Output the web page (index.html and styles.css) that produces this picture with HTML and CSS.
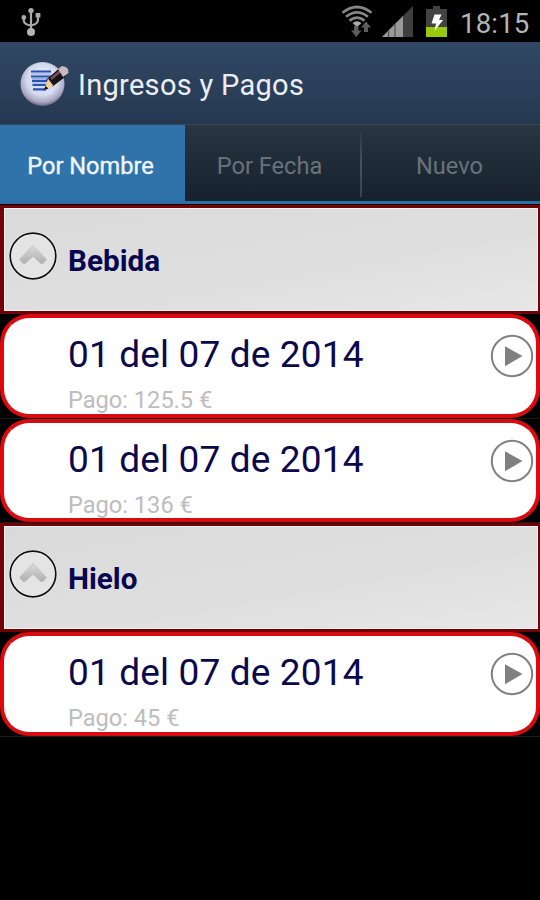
FILE: index.html
```
<!DOCTYPE html>
<html lang="es">
<head>
<meta charset="utf-8">
<title>Ingresos y Pagos</title>
<link rel="stylesheet" href="styles.css">
</head>
<body>
<svg class="defs" width="0" height="0">
  <defs>
    <linearGradient id="chev" x1="0" y1="0" x2="0" y2="1"><stop offset="0" stop-color="#dadada"/><stop offset="1" stop-color="#b0b0b0"/></linearGradient>
    <radialGradient id="disc" cx=".5" cy=".4" r=".6"><stop offset="0" stop-color="#f4f7ff"/><stop offset=".6" stop-color="#d3d8ea"/><stop offset=".85" stop-color="#aaa8c4"/><stop offset="1" stop-color="#6b6484"/></radialGradient>
    <symbol id="up" viewBox="0 0 50 50">
      <circle cx="25" cy="25" r="22.8" fill="#e4e4e4" stroke="#f4f4f4" stroke-width="3"/>
      <circle cx="25" cy="25" r="22.8" fill="none" stroke="#111" stroke-width="1.7"/>
      <path d="M25 14.500 38.500 28.500 35 32.500 32.800 32.500 25 25.200 17.200 32.500 15 32.500 11.500 28.500Z" fill="url(#chev)" stroke="#bdbdbd" stroke-width=".8" stroke-linejoin="round"/>
    </symbol>
    <symbol id="play" viewBox="0 0 44 44">
      <circle cx="22" cy="22" r="20.2" fill="#fff" stroke="#808080" stroke-width="2"/>
      <path d="M15 12.200 32.500 22 15 32.200Z" fill="#808080"/>
    </symbol>
  </defs>
</svg>
<div class="status">
  <svg class="usb" width="20" height="30" viewBox="0 0 20 30" fill="none" stroke="#aaa" stroke-width="2.2">
    <path d="M10 5V24M2.800 11V13.500Q3 17.500 10 18.500M17 9V13Q17 17 10 18.500"/>
    <circle cx="10" cy="3.600" r="2.700" fill="#aaa" stroke="none"/><circle cx="2.800" cy="10.500" r="2.400" fill="#aaa" stroke="none"/><path d="M14.600 6H19.400V10.500H14.600Z" fill="#aaa" stroke="none"/><circle cx="10" cy="25" r="4" fill="#b4b4b4" stroke="none"/>
  </svg>
  <svg class="signals" width="112" height="42" viewBox="340 0 112 42">
    <g fill="none" stroke="#868686" stroke-width="2.700"><path d="M342.500 12.800Q357 1.200 371.500 12.800"/><path d="M346 16.800Q357 8 368 16.800"/><path d="M349.500 20.600Q357 14.500 364.500 20.600"/></g>
    <path d="M352.500 23Q357 19.500 361.500 23L357 27Z" fill="#aaa"/>
    <path d="M354 26H358.500V30.500H361.500L356.300 37 351 30.500H354ZM364 32V27.500H361L366 21.500 371 27.500H368V32Z" fill="#5d5d5d"/>
    <path d="M413 6V37H382Z" fill="#3f3f3f"/><path d="M403 16V37H382Z" fill="#999"/><path d="M388.500 30V37M395 24V37" stroke="#555" stroke-width="1.300"/>
    <path d="M433 6H440V9H447V27H426V9H433Z" fill="#424242"/><path d="M426 27H447V37H426Z" fill="#99c90a"/>
    <path d="M434.500 14.500H441.500L439 20H443L434.500 31 436 23.500H431.500Z" fill="#fff"/>
  </svg>
  <span class="clock">18:15</span>
</div>
<header class="bar">
  <svg class="logo" width="50" height="48" viewBox="0 0 50 48">
    <circle cx="22.500" cy="24" r="22" fill="url(#disc)"/>
    <path d="M8 7 12 10H33V34H13L11 13Z" fill="#d5def8"/>
    <path d="M11 11.500H31M11 16.500H31M12 20.800H29M12.500 25H27M13 29.300H26" stroke="#2d51ac" stroke-width="2.200"/>
    <path d="M11 14H31M12 18.500H29M12 23H28" stroke="#8faeed" stroke-width="1"/>
    <path d="M26 20 39 8.500 47 12 45 17 32 27Z" fill="#171316"/>
    <path d="M31 19 41 10.500" stroke="#745458" stroke-width="2.500"/>
    <path d="M38 9 42 6Q49 6.500 48.500 13L43 17Z" fill="#c7b9bf"/>
    <path d="M28 18.500 33.500 26 24 30Z" fill="#f1cf9b"/><path d="M25.500 26 28.500 28.500 23.500 30.500Z" fill="#181414"/>
  </svg>
  <h1>Ingresos y Pagos</h1>
</header>
<nav class="tabs"><a class="tab active">Por Nombre</a><a class="tab second">Por Fecha</a><a class="tab third">Nuevo</a></nav>
<main>
  <section class="group"><svg class="up"><use href="#up"/></svg><h2>Bebida</h2></section>
  <article class="item"><div class="card"><div class="text"><div class="date">01 del 07 de 2014</div><div class="pay">Pago: 125.5 €</div></div><svg class="play"><use href="#play"/></svg></div></article>
  <article class="item"><div class="card"><div class="text"><div class="date">01 del 07 de 2014</div><div class="pay">Pago: 136 €</div></div><svg class="play"><use href="#play"/></svg></div></article>
  <section class="group"><svg class="up"><use href="#up"/></svg><h2>Hielo</h2></section>
  <article class="item"><div class="card"><div class="text"><div class="date">01 del 07 de 2014</div><div class="pay">Pago: 45 €</div></div><svg class="play"><use href="#play"/></svg></div></article>
</main>
</body>
</html>
```
FILE: styles.css
```
* { box-sizing: border-box; }
body { margin: 0; width: 540px; height: 900px; overflow: hidden; background: #000; font-family: Roboto, "Liberation Sans", sans-serif; }
.defs { display: block; }
.status { height: 42px; display: flex; align-items: flex-start; }
.usb { margin: 7px 0 0 21px; }
.signals { margin-left: 299px; }
.clock { margin-left: 8px; color: #b4b4b4; font-size: 27.5px; line-height: 47px; letter-spacing: .2px; white-space: nowrap; }
.bar { height: 82px; display: flex; align-items: flex-start; background: linear-gradient(#304865, #253850); }
.logo { margin: 18px 0 0 20px; }
h1 { margin: 0 0 0 8px; color: #e9edf2; font-size: 29px; font-weight: 400; line-height: 87px; letter-spacing: .3px; white-space: nowrap; }
.tabs { height: 80px; display: flex; border-top: 1px solid #384858; background: linear-gradient(#283642, #16212d 96%); }
.tab { height: 79px; display: flex; justify-content: center; color: #69727b; font-size: 23.6px; line-height: 82px; white-space: nowrap; border-bottom: 3px solid #2d6da4; }
.active { width: 185px; background: #2f73aa; color: #f0f5f9; padding-right: 4px; -webkit-text-stroke: .4px #f0f5f9; }
.second { width: 176px; padding-right: 7px; }
.third { width: 179px; position: relative; padding-right: 2px; }
.third::before { content: ""; position: absolute; left: -1px; top: 8px; width: 2px; height: 64px; background: linear-gradient(#2d3a47, #465360, #35424f); }
.group { height: 109px; padding-left: 4px; display: flex; border: 3px solid #730006; border-right-width: 2px; border-left-width: 4px; box-shadow: inset 0 0 0 1px #f3f3f3; background: linear-gradient(170deg, #dadada, #dfdfdf 60%, #e7e7e7); }
main { padding-top: 1px; }
.up { width: 50px; height: 50px; margin: 23px 0 0 0; }
h2 { margin: 0 0 0 10px; color: #090650; font-size: 29.7px; font-weight: 700; line-height: 105px; }
.item { height: 104.5px; background: #000; border-bottom: 1px solid #1b1b1b; }
.card { height: 103.5px; border: 4px solid #e0080c; border-top-color: #d60c10; border-bottom-color: #d60c10; border-radius: 29px; background: #fff; display: flex; justify-content: space-between; overflow: hidden; }
.text { padding: 16px 0 0 64px; white-space: nowrap; }
.date { color: #0b084c; font-size: 37px; line-height: 42px; letter-spacing: .15px; }
.pay { margin-top: 10px; color: #bdbdbd; font-size: 23.6px; line-height: 28px; }
.play { width: 44px; height: 44px; margin: 16px 2px 0 0; }
```
